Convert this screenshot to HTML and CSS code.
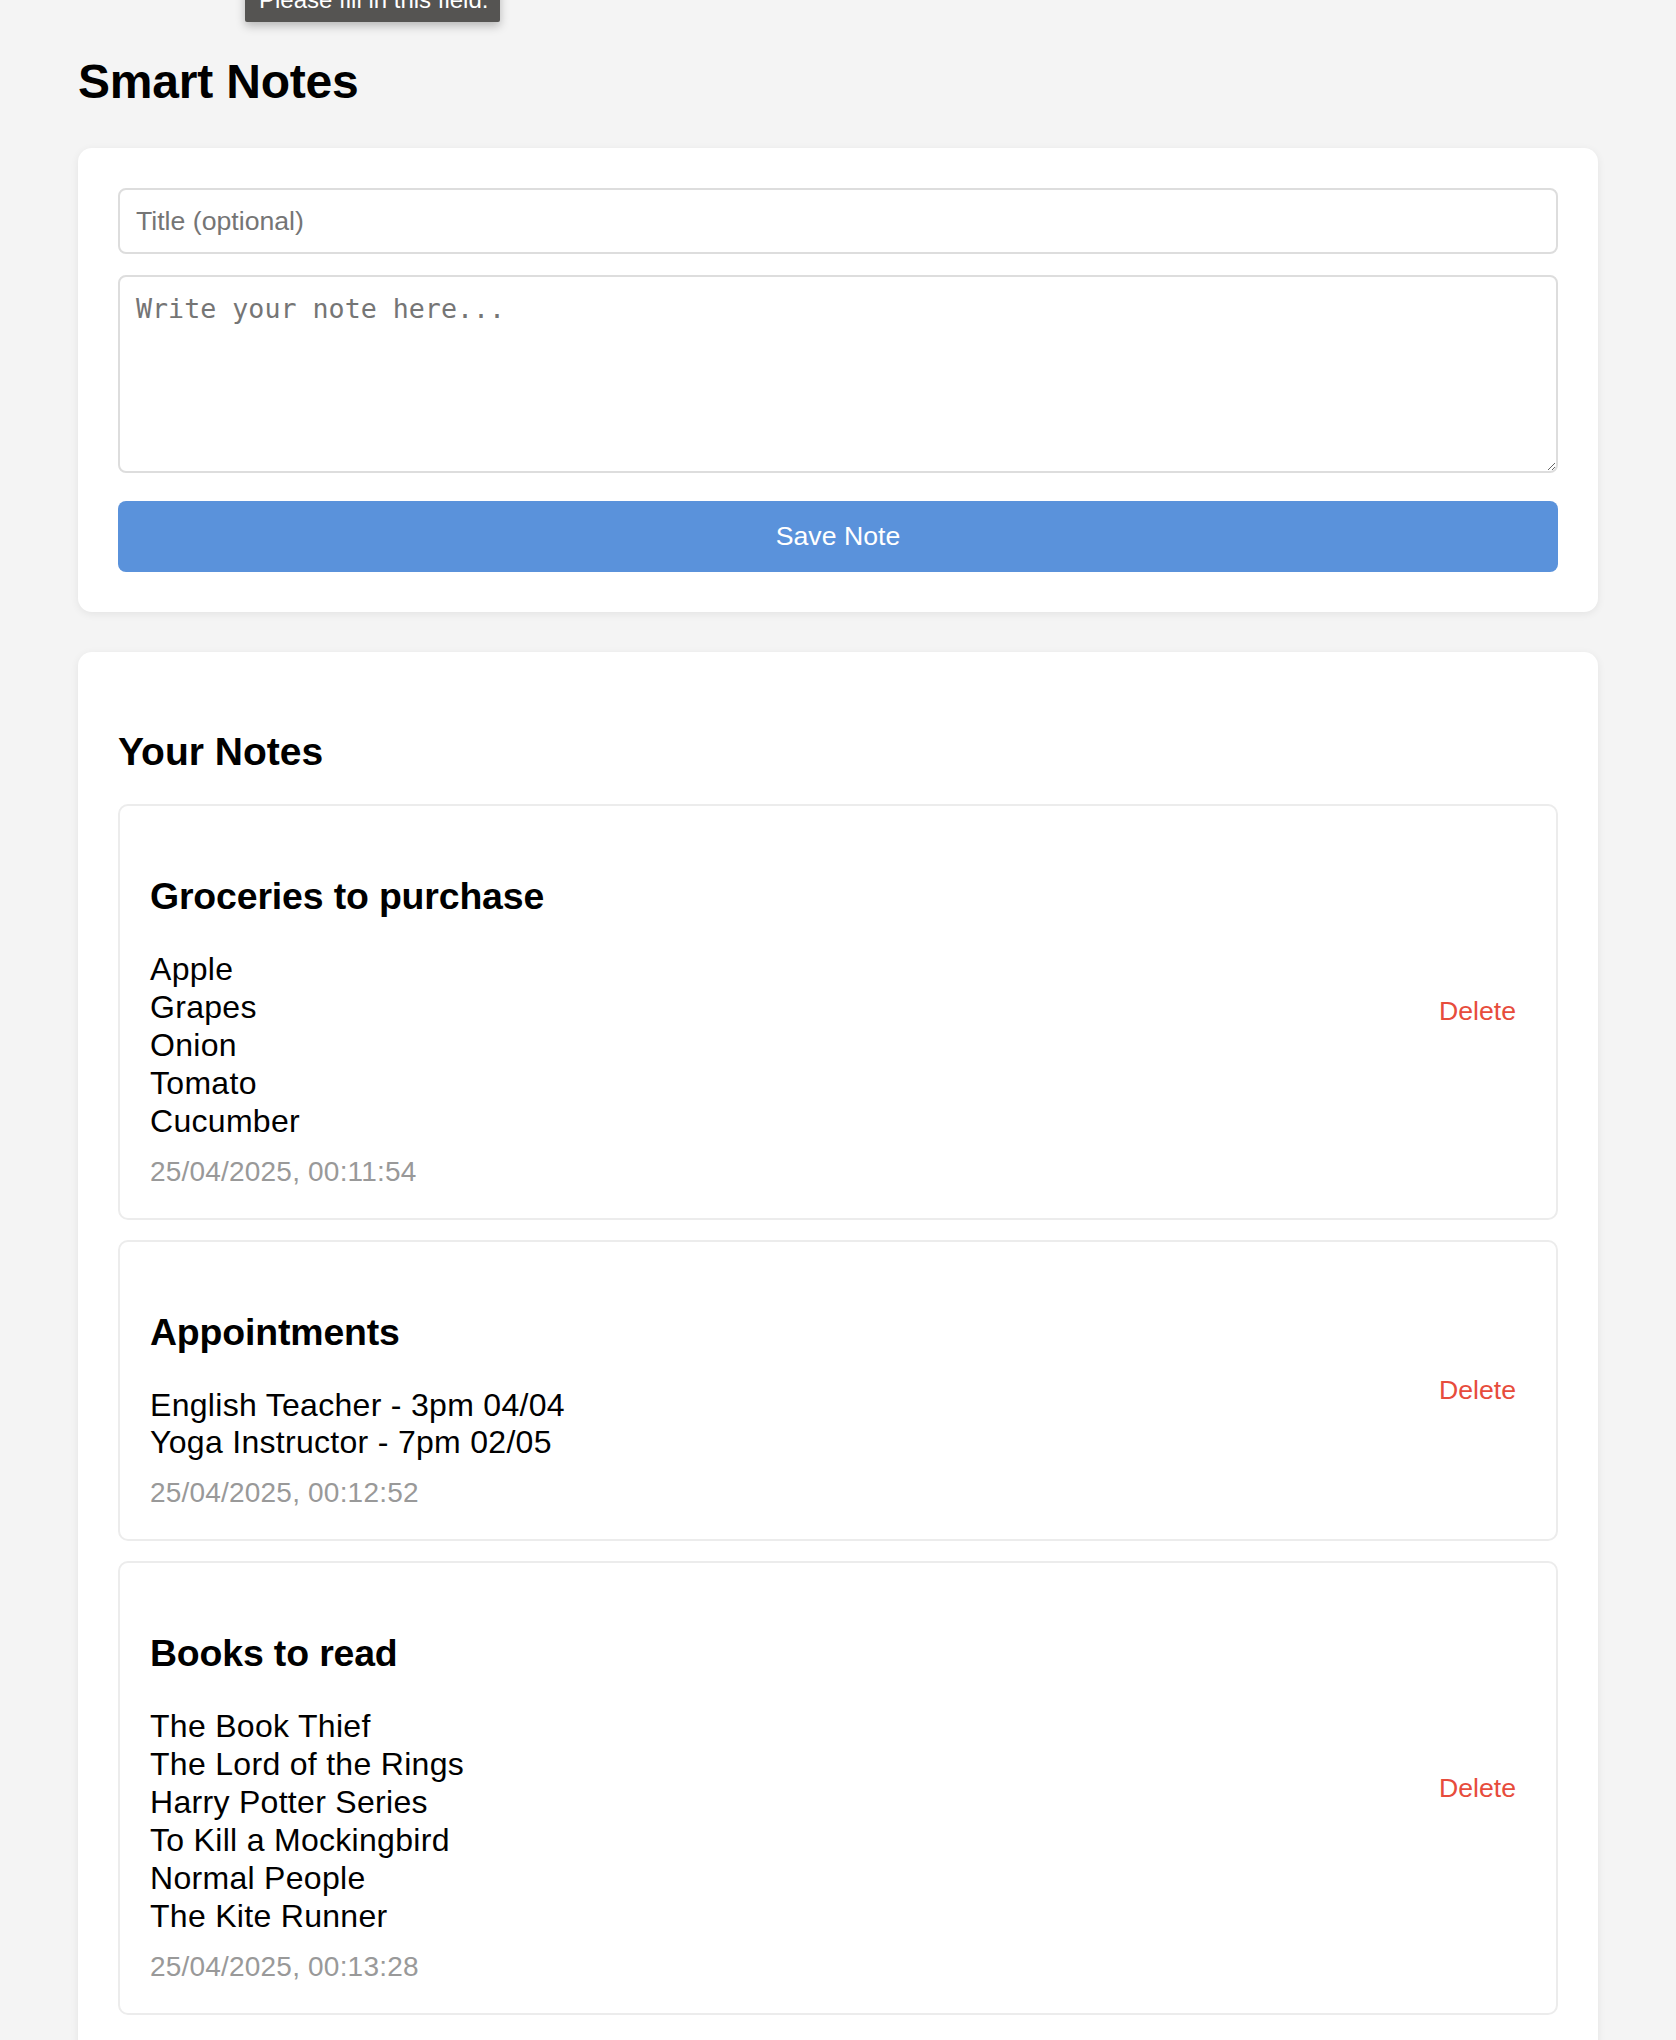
FILE: index.html
```html
<!DOCTYPE html>
<html lang="en">
<head>
<meta charset="utf-8">
<title>Smart Notes</title>
<link rel="stylesheet" href="styles.css">
</head>
<body>
<div class="bubble">Please fill in this field.</div>
<main class="app">
  <h1 class="app-title">Smart Notes</h1>

  <section class="card form-card">
    <input class="field title-field" type="text" placeholder="Title (optional)">
    <textarea class="field note-field" placeholder="Write your note here..."></textarea>
    <button class="save-btn" type="button">Save Note</button>
  </section>

  <section class="card notes-card">
    <h2 class="notes-heading">Your Notes</h2>

    <article class="note">
      <div class="note-body">
        <h3 class="note-title">Groceries to purchase</h3>
        <p class="note-text">Apple
Grapes
Onion
Tomato
Cucumber</p>
        <span class="note-date">25/04/2025, 00:11:54</span>
      </div>
      <button class="delete-btn" type="button">Delete</button>
    </article>

    <article class="note">
      <div class="note-body">
        <h3 class="note-title">Appointments</h3>
        <p class="note-text">English Teacher - 3pm 04/04
Yoga Instructor - 7pm 02/05</p>
        <span class="note-date">25/04/2025, 00:12:52</span>
      </div>
      <button class="delete-btn" type="button">Delete</button>
    </article>

    <article class="note">
      <div class="note-body">
        <h3 class="note-title">Books to read</h3>
        <p class="note-text">The Book Thief
The Lord of the Rings
Harry Potter Series
To Kill a Mockingbird
Normal People
The Kite Runner</p>
        <span class="note-date">25/04/2025, 00:13:28</span>
      </div>
      <button class="delete-btn" type="button">Delete</button>
    </article>
  </section>
</main>
</body>
</html>
```

FILE: styles.css
```css
* {
  box-sizing: border-box;
}

html, body {
  margin: 0;
  padding: 0;
  background: #f4f4f4;
}

body {
  font-family: "Liberation Sans", Arial, sans-serif;
  font-size: 32px;
  color: #000;
  padding-top: 54px;
  position: relative;
}

.bubble {
  position: absolute;
  left: 245px;
  top: -14px;
  width: 255px;
  height: 36px;
  background: #555452;
  color: #fff;
  font-size: 24px;
  line-height: 28px;
  padding: 0 14px;
  border-radius: 2px;
  box-shadow: 0 4px 10px rgba(0, 0, 0, 0.25);
  white-space: nowrap;
  z-index: 5;
}

.app {
  max-width: 1520px;
  margin: 0 auto;
}

.app-title {
  font-size: 48px;
  line-height: 56px;
  font-weight: bold;
  letter-spacing: -0.2px;
  margin: 0 0 38px;
}

.card {
  background: #fff;
  border-radius: 14px;
  padding: 40px;
  box-shadow: 0 2px 8px rgba(0, 0, 0, 0.07);
}

.form-card {
  margin-bottom: 40px;
}

.field {
  display: block;
  width: 100%;
  border: 2px solid #dddddd;
  border-radius: 8px;
  padding: 16px;
  background: #fff;
  color: #000;
}

.title-field {
  height: 66px;
  font-family: "Liberation Sans", Arial, sans-serif;
  font-size: 26.67px;
  margin-bottom: 21px;
}

.note-field {
  height: 198px;
  font-family: "DejaVu Sans Mono", "Liberation Mono", monospace;
  font-size: 26.67px;
  margin-bottom: 28px;
  resize: vertical;
}

.field::placeholder {
  color: #757575;
}

.save-btn {
  display: block;
  width: 100%;
  height: 71px;
  border: none;
  border-radius: 8px;
  background: #5a92db;
  color: #fff;
  font-family: "Liberation Sans", Arial, sans-serif;
  font-size: 26.67px;
}

.notes-card {
  padding-bottom: 60px;
}

.notes-heading {
  font-size: 39px;
  line-height: 46px;
  font-weight: bold;
  margin: 37px 0 29px;
}

.note {
  display: flex;
  align-items: center;
  justify-content: space-between;
  border: 2px solid #ececec;
  border-radius: 10px;
  padding: 30px;
  margin-bottom: 20px;
}

.note-body {
  display: flex;
  flex-direction: column;
}

.note-title {
  font-size: 37.44px;
  line-height: 44px;
  font-weight: bold;
  letter-spacing: -0.15px;
  margin: 38px 0 33px;
}

.note-text {
  font-size: 32px;
  line-height: 37.9px;
  letter-spacing: 0.3px;
  margin: 0 0 15px;
  white-space: pre-line;
}

.note-date {
  font-size: 28px;
  line-height: 32px;
  letter-spacing: 0.2px;
  color: #999999;
}

.delete-btn {
  background: none;
  border: none;
  color: #e74c3c;
  font-family: "Liberation Sans", Arial, sans-serif;
  font-size: 26.67px;
  padding: 4px 10px;
}
```
